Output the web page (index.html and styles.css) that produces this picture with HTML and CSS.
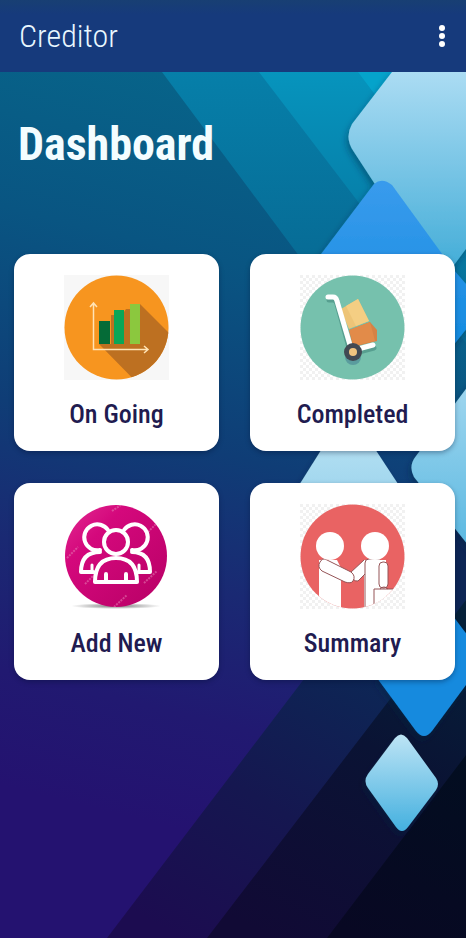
FILE: index.html
```html
<!DOCTYPE html>
<html lang="en">
<head>
<meta charset="utf-8">
<meta name="viewport" content="width=device-width, initial-scale=1">
<title>Creditor</title>
<link rel="stylesheet" href="styles.css">
</head>
<body>
<header class="appbar">
  <span class="appbar-title">Creditor</span>
  <button class="menu" type="button" aria-label="More options">
    <svg viewBox="0 0 8 24" aria-hidden="true"><circle cx="4" cy="4" r="3"/><circle cx="4" cy="12" r="3"/><circle cx="4" cy="20" r="3"/></svg>
  </button>
</header>
<main class="page">
  <svg class="backdrop" viewBox="0 72 466 866" preserveAspectRatio="none" aria-hidden="true">
    <defs>
      <linearGradient id="base" gradientUnits="userSpaceOnUse" x1="240" y1="72" x2="60" y2="800"><stop offset="0" stop-color="#07658a"/><stop offset=".25" stop-color="#095582"/><stop offset=".5" stop-color="#0f3d76"/><stop offset=".68" stop-color="#1a2973"/><stop offset=".85" stop-color="#211971"/><stop offset="1" stop-color="#241270"/></linearGradient>
      <linearGradient id="band1" gradientUnits="userSpaceOnUse" x1="300" y1="72" x2="300" y2="480"><stop offset="0" stop-color="#067fa9"/><stop offset=".45" stop-color="#076c96"/><stop offset="1" stop-color="#0c4b77"/></linearGradient>
      <linearGradient id="band2" gradientUnits="userSpaceOnUse" x1="350" y1="72" x2="350" y2="500"><stop offset="0" stop-color="#0694bd"/><stop offset=".4" stop-color="#067aa4"/><stop offset="1" stop-color="#0a4b72"/></linearGradient>
      <linearGradient id="night1" gradientUnits="userSpaceOnUse" x1="340" y1="660" x2="180" y2="938"><stop offset="0" stop-color="#0d2655"/><stop offset=".5" stop-color="#151750"/><stop offset="1" stop-color="#1c0c50"/></linearGradient>
      <linearGradient id="night2" gradientUnits="userSpaceOnUse" x1="440" y1="620" x2="270" y2="938"><stop offset="0" stop-color="#052039"/><stop offset=".4" stop-color="#0a1334"/><stop offset="1" stop-color="#110a35"/></linearGradient>
      <linearGradient id="night3" gradientUnits="userSpaceOnUse" x1="466" y1="740" x2="360" y2="938"><stop offset="0" stop-color="#020e20"/><stop offset="1" stop-color="#080823"/></linearGradient>
      <linearGradient id="ice" x1="0" y1="0" x2="0" y2="1"><stop offset="0" stop-color="#bde4f5"/><stop offset="1" stop-color="#44b0df"/></linearGradient>
      <linearGradient id="pale" x1="0" y1="0" x2="0" y2="1"><stop offset="0" stop-color="#bfe5f4"/><stop offset="1" stop-color="#a0d6ee"/></linearGradient>
      <linearGradient id="side" x1="0" y1="0" x2="0" y2="1"><stop offset="0" stop-color="#a6d9f0"/><stop offset="1" stop-color="#55b6e0"/></linearGradient>
      <linearGradient id="ice2" gradientUnits="userSpaceOnUse" x1="0" y1="72" x2="0" y2="260"><stop offset="0" stop-color="#abdcf3"/><stop offset="1" stop-color="#48afd9"/></linearGradient>
      <linearGradient id="blue" gradientUnits="userSpaceOnUse" x1="0" y1="180" x2="0" y2="340"><stop offset="0" stop-color="#399bed"/><stop offset="1" stop-color="#168ce0"/></linearGradient>
      <filter id="soft" x="-20%" y="-20%" width="140%" height="140%"><feDropShadow dx="-2" dy="4" stdDeviation="3" flood-color="#002a45" flood-opacity=".4"/></filter>
    </defs>
    <path fill="url(#base)" d="M0 72H466V938H0Z"/>
    <path fill="url(#band1)" d="M162 72H466V480Z"/>
    <path fill="url(#band2)" d="M259 72H466V343Z"/>
    <path fill="#05a3cb" d="M358 72H466V216Z"/>
    <path fill="url(#night1)" d="M107 938L466 466V938Z"/>
    <path fill="url(#night2)" d="M207 938L466 600V938Z"/>
    <path fill="url(#night3)" d="M327 938L466 755V938Z"/>
    <g filter="url(#soft)">
      <path fill="url(#ice2)" d="M392 72H480V230L440 284L354 152Q344 138 352 124Z"/>
      <path fill="url(#blue)" d="M440 254L480 300V312L440 362Z"/>
      <path fill="url(#blue)" d="M374 184Q382 177 392 185L448 262L382 350L315 262Z"/>
      <path fill="url(#pale)" d="M340 420Q348 410 356 420L402 490H296Z"/>
      <path fill="url(#side)" d="M480 370L416 456Q408 466 414 477L480 560Z"/>
      <path fill="#168ade" d="M377 678L416 731Q424 741 432 731L480 666V652L450 612L420 630Z"/>
      <path fill="url(#ice)" d="M395 738Q401 731 407 738L436 778Q440 784 436 790L408 827Q402 835 396 827L368 788Q363 781 368 774Z"/>
    </g>
  </svg>
  <h1 class="heading">Dashboard</h1>
  <nav class="grid" aria-label="Dashboard">
    <a class="card" href="#ongoing">
      <svg class="icon" viewBox="0 0 105 105" aria-hidden="true">
        <clipPath id="c1"><circle cx="52.500" cy="52.500" r="52"/></clipPath>
        <path fill="#f7f7f7" d="M0 0H105V105H0Z"/><circle cx="52.500" cy="52.500" r="52" fill="#f7951f"/>
        <path clip-path="url(#c1)" fill="#bd7021" d="M76 29L120 73V120H85L35 69H47V40H58L62 34H66Z"/>
        <path fill="#056b37" d="M35 46h11v23H35z"/><path fill="#0aa657" d="M50 35h10v34H50z"/><path fill="#8bc83e" d="M66 29h10v40H66z"/>
        <path fill="none" stroke="#ffe3b5" stroke-width="1.500" d="M29.500 29V74.500H83M26 32L29.500 28L33 32M80 71L84 74.500L80 78"/>
      </svg>
      <span class="label">On Going</span>
    </a>
    <a class="card" href="#completed">
      <svg class="icon" viewBox="0 0 105 105" aria-hidden="true">
        <defs><pattern id="check" width="6" height="6" patternUnits="userSpaceOnUse"><path fill="#fff" d="M0 0h6v6H0z"/><path fill="#f1f1f1" d="M0 0h3v3H0zM3 3h3v3H3z"/></pattern></defs>
        <path fill="url(#check)" d="M0 0H105V105H0Z"/><circle cx="52.500" cy="52.500" r="52" fill="#76c1ad"/>
        <path fill="none" stroke="#579f90" stroke-width="5" stroke-linecap="round" d="M29 25H33Q36 25 37 29L50 76M55 78L74 73"/>
        <circle cx="53" cy="82" r="8" fill="#5a9c9e"/>
        <path fill="#edc477" d="M41 34L58 24L69 46L49 54L45 45Z"/><path fill="#f4ce83" d="M46 31L58 24L69 46L56 51Z"/>
        <path fill="#d58245" d="M49 55L70 47L77 55V66L53 72Z"/><path fill="#e28b49" d="M49 55L70 47L75 66L54 71Z"/>
        <path fill="none" stroke="#fff" stroke-width="5" stroke-linecap="round" stroke-linejoin="round" d="M28 22H33Q36 22 37 26L50 70"/>
        <path stroke="#fff" stroke-width="5" stroke-linecap="round" d="M58 74L73 70"/>
        <circle cx="53" cy="77" r="9" fill="#424953"/><circle cx="53" cy="77" r="4" fill="#f0c480"/>
      </svg>
      <span class="label">Completed</span>
    </a>
    <a class="card" href="#add">
      <svg class="icon" viewBox="0 0 105 105" aria-hidden="true">
        <defs><linearGradient id="pink" x1="0" y1="0" x2="1" y2="1"><stop offset="0" stop-color="#e32b92"/><stop offset=".3" stop-color="#d4087c"/><stop offset="1" stop-color="#b70065"/></linearGradient>
        <radialGradient id="ground"><stop offset="0" stop-color="#777"/><stop offset="1" stop-color="#fff"/></radialGradient>
        <clipPath id="c3"><circle cx="52" cy="52" r="51"/></clipPath></defs>
        <ellipse cx="52" cy="102" rx="45" ry="3" fill="url(#ground)"/>
        <circle cx="52" cy="52" r="51" fill="url(#pink)"/>
        <path clip-path="url(#c3)" stroke="#e989ba" stroke-width="2" stroke-dasharray="2 1" opacity=".5" d="M3 54L14 43M50 103L63 91M80 79L93 67M84 28L94 18M48 7L57 1M21 80L29 72M20 30L31 20"/>
        <g fill="none" stroke="#fff" stroke-width="4" stroke-linecap="round" stroke-linejoin="round">
          <path d="M36 46A13 13 0 1 1 44 26M60 26A13 13 0 1 1 68 46"/>
          <circle cx="52" cy="38" r="12"/>
          <path d="M31 78Q31 54 52 54T73 78ZM36 48Q17 48 17 68H29M68 48Q86 48 86 68H75M42 70V76M62 70V76"/>
          <path stroke-width="3" d="M28 61V67M75 61V67"/>
        </g>
      </svg>
      <span class="label">Add New</span>
    </a>
    <a class="card" href="#summary">
      <svg class="icon" viewBox="0 0 105 105" aria-hidden="true">
        <clipPath id="c2"><circle cx="52.500" cy="52.500" r="52"/></clipPath>
        <path fill="url(#check)" d="M0 0H105V105H0Z"/><circle cx="52.500" cy="52.500" r="52" fill="#e96363"/>
        <g clip-path="url(#c2)" fill="#fff" stroke="#955457" stroke-width="1">
          <path stroke="none" d="M19 56H37L41 64V105H19ZM64 56H86V105H64Z"/>
          <path d="M64 56L50 69Q53 78 58 77L66 69"/><path d="M65 105V59Q65 55 69 55H80"/>
          <path d="M25 55L51 68Q56 72 53 77Q51 80 45 78L22 67Q17 63 20 58Q22 54 25 55Z"/>
          <rect x="79" y="58" width="9" height="26" rx="4"/><path d="M74 105V85H96V105"/><path fill="none" d="M80 85Q84 81 88 85"/>
        </g>
        <circle cx="30" cy="42" r="14" fill="#fff"/><circle cx="75" cy="42" r="14" fill="#fff"/>
      </svg>
      <span class="label">Summary</span>
    </a>
  </nav>
</main>
</body>
</html>
```
FILE: styles.css
```css
* { box-sizing: border-box; }
body {
  margin: 0;
  min-height: 100vh;
  display: flex;
  flex-direction: column;
  font-family: "Roboto Condensed", "Liberation Sans Narrow", Roboto, sans-serif;
}
.appbar {
  display: flex;
  align-items: center;
  justify-content: space-between;
  padding: 0 16px 0 19px;
  height: 72px;
  background: linear-gradient(#183f73, #163a7c 20%);
  color: #e9f7ff;
}
.appbar-title { font-size: 32px; font-weight: 300; line-height: 40px; }
.menu { width: 16px; height: 40px; padding: 0; border: 0; background: none; }
.menu svg { display: block; width: 8px; height: 24px; margin: 0 auto; fill: #fff; }
.page { position: relative; flex: 1; padding: 44px 11px 24px 14px; background: #163077; }
.backdrop { position: absolute; inset: 0; width: 100%; height: 100%; }
.heading { position: relative; margin: 0 0 82px 4px; font-size: 46px; line-height: 56px; font-weight: 700; color: #f3fdff; }
.grid { position: relative; display: grid; grid-template-columns: 1fr 1fr; gap: 32px 31px; }
.card {
  display: flex;
  flex-direction: column;
  align-items: center;
  gap: 18px;
  padding: 21px 8px;
  border-radius: 16px;
  background: #fff;
  box-shadow: 0 2px 5px rgba(0, 15, 45, .35);
  color: #211b50;
  text-decoration: none;
}
.icon { width: 105px; height: 105px; }
.label { font-size: 26px; line-height: 32px; font-weight: 500; }
```
